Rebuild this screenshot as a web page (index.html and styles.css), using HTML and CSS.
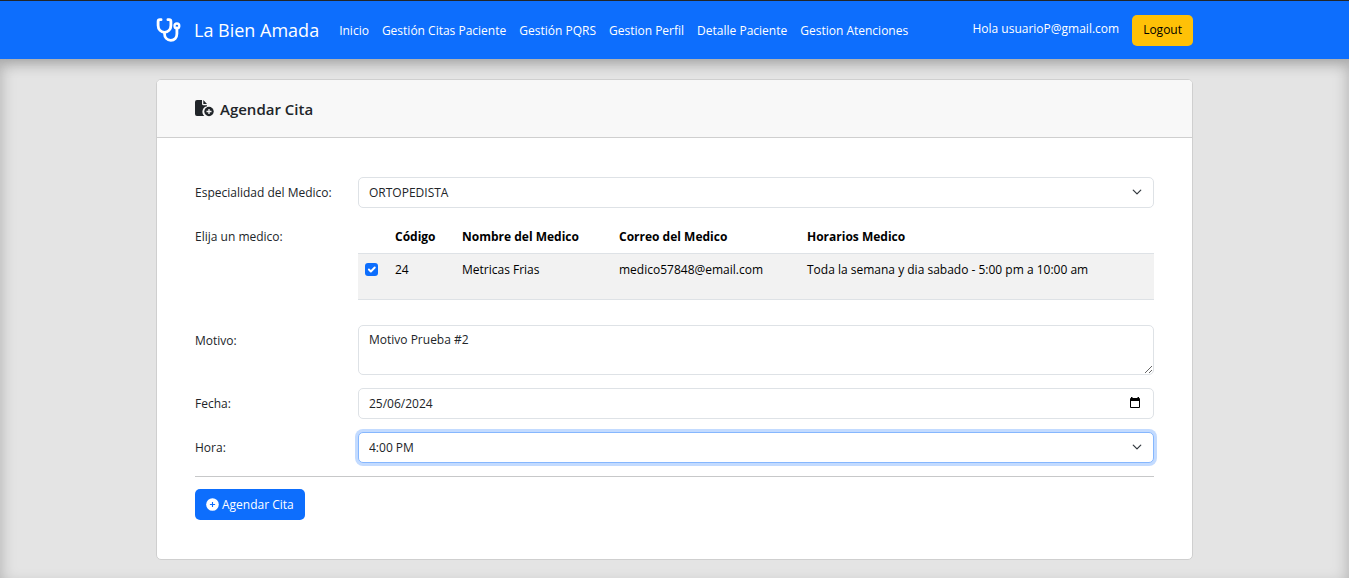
FILE: index.html
```html
<!DOCTYPE html>
<html lang="es">
<head>
<meta charset="utf-8">
<meta name="viewport" content="width=device-width, initial-scale=1">
<title>La Bien Amada - Agendar Cita</title>
<link rel="stylesheet" href="styles.css">
</head>
<body>
<header class="navbar">
  <div class="container navbar-inner">
    <a class="brand" href="#">
      <svg class="brand-icon" viewBox="0 0 24 24" fill="none" stroke="currentColor" stroke-linecap="round" stroke-linejoin="round" aria-hidden="true">
        <path stroke-width="2.8" d="M4.6 1.7H3.4Q1.6 1.7 1.6 3.5V7.5C1.6 11.5 4.5 14.3 8 14.3S14.4 11.5 14.4 7.5V3.5Q14.4 1.7 12.6 1.7H11.4M8 14.5V15.5C8 19.5 10.6 22.3 14.3 22.3S20.4 19.5 20.4 15.8V10"/>
        <circle cx="20.4" cy="7.9" r="2.4" stroke-width="2.3"/>
      </svg>
      <span>La Bien Amada</span>
    </a>
    <nav class="nav-links">
      <a href="#">Inicio</a>
      <a href="#">Gestión Citas Paciente</a>
      <a href="#">Gestión PQRS</a>
      <a href="#">Gestion Perfil</a>
      <a href="#">Detalle Paciente</a>
      <a href="#">Gestion Atenciones</a>
    </nav>
    <div class="session">
      <span class="greeting">Hola usuarioP@gmail.com</span>
      <button class="btn btn-warning" type="button">Logout</button>
    </div>
  </div>
</header>
<main class="page">
  <section class="container card">
    <div class="card-header">
      <svg class="title-icon" viewBox="0 0 19 17" aria-hidden="true">
        <path fill="currentColor" d="M2 0H7V3.7Q7 5.2 8.5 5.2H12V6.3A5.6 5.6 0 0 0 9.3 16H2Q0 16 0 14V2Q0 0 2 0ZM8.3 0 12 4H8.3Z"/>
        <circle cx="14" cy="11.5" r="4.7" fill="currentColor"/>
        <path d="M14 9V14M11.5 11.5H16.5" stroke="#f8f8f8" stroke-width="1.3"/>
      </svg>
      <h1>Agendar Cita</h1>
    </div>
    <form class="card-body">
      <div class="row">
        <label for="especialidad">Especialidad del Medico:</label>
        <div class="select-wrap">
          <select id="especialidad" class="control"><option>ORTOPEDISTA</option></select>
          <svg class="chevron" viewBox="0 0 16 16" aria-hidden="true"><path d="m2 5 6 6 6-6"/></svg>
        </div>
      </div>
      <div class="row row-table">
        <span class="label" id="medico-label">Elija un medico:</span>
        <table aria-labelledby="medico-label">
          <colgroup><col class="col-check"><col class="col-code"><col class="col-name"><col class="col-mail"><col></colgroup>
          <thead>
            <tr><th></th><th>Código</th><th>Nombre del Medico</th><th>Correo del Medico</th><th>Horarios Medico</th></tr>
          </thead>
          <tbody>
            <tr>
              <td><span class="check-wrap"><input type="checkbox" class="check" aria-label="Metricas Frias" checked><svg class="tick" viewBox="0 0 20 20" aria-hidden="true"><path d="m6 10 3 3 6-6"/></svg></span></td>
              <td>24</td><td>Metricas Frias</td><td>medico57848@email.com</td><td>Toda la semana y dia sabado - 5:00 pm a 10:00 am</td>
            </tr>
          </tbody>
        </table>
      </div>
      <div class="row">
        <label for="motivo">Motivo:</label>
        <textarea id="motivo" class="control" rows="2">Motivo Prueba #2</textarea>
      </div>
      <div class="row">
        <label for="fecha">Fecha:</label>
        <div class="select-wrap">
          <input id="fecha" class="control" type="text" inputmode="numeric" value="25/06/2024">
          <svg class="calendar" viewBox="0 0 10 11" aria-hidden="true"><path fill="currentColor" fill-rule="evenodd" d="M1 0H2.5V1H7.5V0H9V1Q10 1 10 2V10Q10 11 9 11H1Q0 11 0 10V2Q0 1 1 1ZM1 4V10H9V4Z"/></svg>
        </div>
      </div>
      <div class="row">
        <label for="hora">Hora:</label>
        <div class="select-wrap">
          <select id="hora" class="control control-active"><option>4:00 PM</option></select>
          <svg class="chevron" viewBox="0 0 16 16" aria-hidden="true"><path d="m2 5 6 6 6-6"/></svg>
        </div>
      </div>
      <hr>
      <button class="btn btn-primary" type="button">
        <svg class="plus-icon" viewBox="0 0 14 14" aria-hidden="true"><circle cx="7" cy="7" r="6.8" fill="#fff"/><path d="M7 4.2V9.8M4.2 7H9.8" stroke="#0d6efd" stroke-width="1.2"/></svg>
        Agendar Cita
      </button>
    </form>
  </section>
</main>
</body>
</html>
```
FILE: styles.css
```css
* { box-sizing: border-box; }

body {
  margin: 0;
  min-height: 100vh;
  display: flex;
  flex-direction: column;
  font-family: "Open Sans", "Noto Sans", sans-serif;
  font-size: 12px;
  line-height: 20px;
  color: #212529;
  background: #e4e4e4;
}

button, input, select, textarea { font: inherit; color: inherit; }

.container {
  width: calc(100% - 20px);
  max-width: 1037px;
  margin: 0 auto;
}

.navbar {
  position: relative;
  background: #0d6efd;
  border-top: 1px solid #212529;
  color: #fff;
  box-shadow: 0 6px 13px rgba(0, 0, 0, .15);
}

.navbar-inner {
  display: flex;
  align-items: center;
  min-height: 58px;
}

.brand {
  display: flex;
  align-items: center;
  gap: 13px;
  margin-right: 20px;
  color: #fff;
  font-size: 18px;
  text-decoration: none;
  white-space: nowrap;
}

.brand-icon { width: 25px; height: 24px; }

.nav-links { display: flex; gap: 13px; padding-top: 1px; white-space: nowrap; }
.nav-links a { color: #fff; text-decoration: none; }

.session {
  display: flex;
  gap: 13px;
  margin-left: auto;
}

.greeting { padding-top: 4px; }

.btn {
  display: inline-flex;
  align-items: center;
  gap: 3px;
  height: 31px;
  padding: 0 11px;
  border: 0;
  border-radius: 5px;
}
.btn-warning { background: #ffc107; color: #000; }
.btn-primary { background: #0d6efd; color: #fff; }
.plus-icon { width: 13px; height: 13px; }

.page {
  flex: 1;
  padding: 20px 0 26px;
  box-shadow: inset 0 0 16px rgba(0, 0, 0, .25);
}

.card {
  background: #fff;
  border: 1px solid #cfcfcf;
  border-radius: 5px;
}

.card-header {
  display: flex;
  align-items: center;
  gap: 6px;
  min-height: 58px;
  padding: 0 38px;
  background: #f8f8f8;
  border-bottom: 1px solid #cfcfcf;
  border-radius: 4px 4px 0 0;
}

.card-header h1 { margin: 0; font-size: 15px; font-weight: 600; }
.title-icon { width: 19px; height: 17px; }

.card-body { padding: 39px 38px; }

.row {
  display: grid;
  grid-template-columns: 163px minmax(0, 1fr);
  align-items: start;
  margin-bottom: 13px;
}
.row label, .label { padding-top: 6px; }
.row-table { margin-bottom: 25px; }

.select-wrap { position: relative; }

.control {
  display: block;
  width: 100%;
  height: 31px;
  padding: 0 10px;
  border: 1px solid #dee2e6;
  border-radius: 5px;
  background: #fff;
  appearance: none;
  outline: 0;
}
textarea.control { height: 50px; padding-top: 4px; resize: vertical; }
.control-active {
  border-color: #86b7fe;
  box-shadow: 0 0 0 3px #c3dbff;
}

.chevron {
  position: absolute;
  right: 12px;
  top: 10px;
  width: 10px;
  height: 10px;
  fill: none;
  stroke: #343a40;
  stroke-width: 2;
  stroke-linecap: round;
  stroke-linejoin: round;
  pointer-events: none;
}
.calendar {
  position: absolute;
  right: 14px;
  top: 9px;
  width: 10px;
  height: 11px;
  color: #000;
}

table {
  width: 100%;
  table-layout: fixed;
  border-collapse: collapse;
  color: #000;
}
.col-check { width: 31px; }
.col-code { width: 67px; }
.col-name { width: 157px; }
.col-mail { width: 188px; }
th, td {
  padding: 6px;
  border-bottom: 1px solid #dee2e6;
  text-align: left;
  vertical-align: top;
}
td { height: 46px; background: #f2f2f2; }

.check-wrap { position: relative; display: block; width: 14px; height: 14px; margin: 3px 0 0 1px; }
.check {
  display: block;
  width: 13px;
  height: 13px;
  margin: 0;
  appearance: none;
  border-radius: 3px;
  background: #0d6efd;
}
.tick {
  position: absolute;
  left: 0;
  top: 0;
  width: 13px;
  height: 13px;
  fill: none;
  stroke: #fff;
  stroke-width: 3;
  stroke-linecap: round;
  stroke-linejoin: round;
  pointer-events: none;
}

hr {
  margin: 0 0 12px;
  border: 0;
  border-top: 1px solid #c7c8c9;
}
```
